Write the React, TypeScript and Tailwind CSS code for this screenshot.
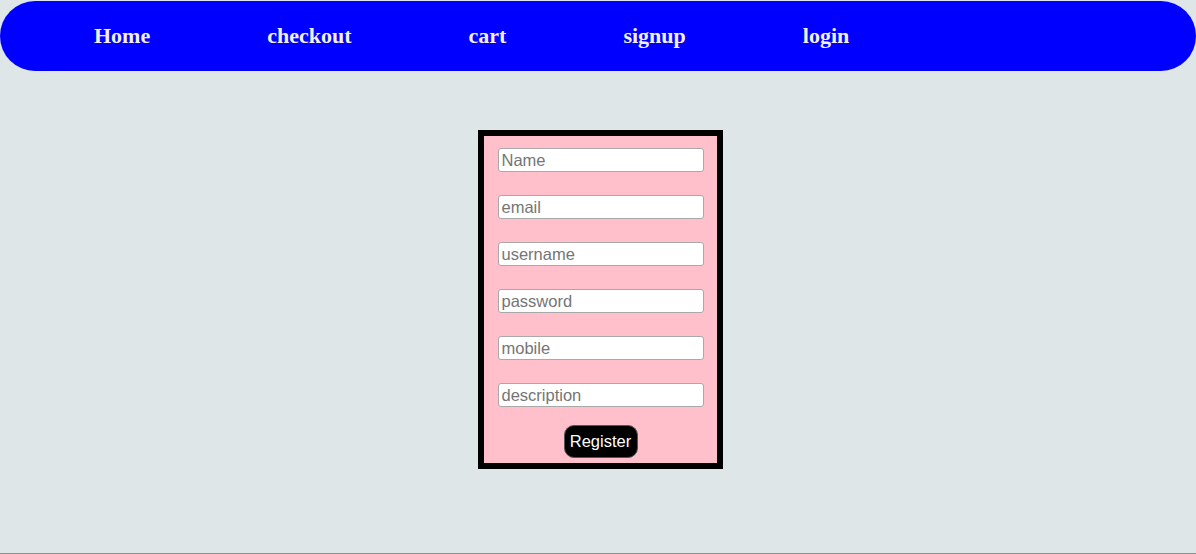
import React from "react";

export default function App() {
  const fields = ["Name", "email", "username", "password", "mobile", "description"];
  const links = ["Home", "checkout", "cart", "signup", "login"];
  return (
    <div className="h-[554px] bg-[#dee6e8] border-b border-[#8a8f90] flex flex-col items-center" style={{ boxSizing: "border-box" }}>
      <nav className="mt-[1px] w-full h-[70px] bg-[#0000ff] rounded-[35px] flex items-center pl-[94px] gap-[117px]">
        {links.map((l) => (
          <a key={l} className="text-[#f2f0e6] font-bold text-[22px] leading-none -mt-[1px]" style={{ fontFamily: '"Liberation Serif", serif' }}>
            {l}
          </a>
        ))}
      </nav>
      <form className="mt-[59px] ml-[5px] w-[245px] border-[6px] border-black bg-[#ffc0cb] flex flex-col items-center pt-[12px] pb-[5px] gap-[23px]" style={{ fontFamily: '"Liberation Sans", Arial, sans-serif' }}>
        {fields.map((f) => (
          <input
            key={f}
            placeholder={f}
            className="w-[206px] h-[24px] bg-white border border-[#a9a9a9] rounded-[3px] pl-[3px] pr-[4px] text-[16.5px] placeholder:text-[#757575] outline-none"
          />
        ))}
        <button type="button" className="-mt-[5px] w-[74px] h-[33px] bg-black text-white text-[16.5px] rounded-[10px] border border-[#555]">
          Register
        </button>
      </form>
    </div>
  );
}
